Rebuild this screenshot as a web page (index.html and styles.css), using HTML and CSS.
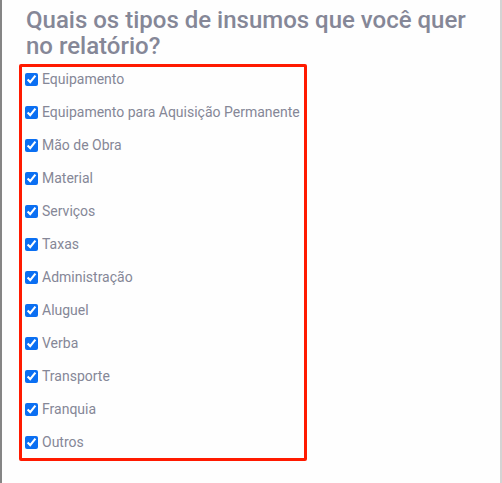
FILE: index.html
```html
<!DOCTYPE html>
<html lang="pt-BR">
<head>
    <meta charset="UTF-8">
    <meta name="viewport" content="width=device-width, initial-scale=1.0">
    <title>Tipos de insumos</title>
    <link rel="stylesheet" href="styles.css">
</head>
<body>
    <div class="panel">
        <h2 class="question">Quais os tipos de insumos que você quer no relatório?</h2>
        <div class="options">
            <label class="option"><input type="checkbox" checked> Equipamento</label>
            <label class="option"><input type="checkbox" checked> Equipamento para Aquisição Permanente</label>
            <label class="option"><input type="checkbox" checked> Mão de Obra</label>
            <label class="option"><input type="checkbox" checked> Material</label>
            <label class="option"><input type="checkbox" checked> Serviços</label>
            <label class="option"><input type="checkbox" checked> Taxas</label>
            <label class="option"><input type="checkbox" checked> Administração</label>
            <label class="option"><input type="checkbox" checked> Aluguel</label>
            <label class="option"><input type="checkbox" checked> Verba</label>
            <label class="option"><input type="checkbox" checked> Transporte</label>
            <label class="option"><input type="checkbox" checked> Franquia</label>
            <label class="option"><input type="checkbox" checked> Outros</label>
        </div>
    </div>
</body>
</html>
```

FILE: styles.css
```css
html, body {
    margin: 0;
    height: 100%;
}
body {
    font-family: Roboto, "Liberation Sans", Arial, sans-serif;
    background-color: #fefefe;
}
.panel {
    box-sizing: border-box;
    height: 100%;
    width: 502px;
    border-left: 2px solid #858585;
    border-right: 2px solid #d4d4d4;
    padding: 7px 0 0 17px;
}
.question {
    margin: 0 0 5px 7px;
    font-size: 24px;
    font-weight: 500;
    line-height: 26px;
    color: #858797;
    width: 450px;
}
.options {
    box-sizing: border-box;
    width: 288px;
    border: 3px solid #ff1a00;
    border-radius: 2px;
    padding: 2px 0 6px 0;
    display: flex;
    flex-direction: column;
    gap: 13px;
}
.option {
    display: flex;
    align-items: center;
    height: 20px;
    font-size: 14px;
    color: #858797;
}
.option input {
    width: 13px;
    height: 13px;
    margin: 0 4px 0 3px;
    accent-color: #0b6ff2;
}
```
